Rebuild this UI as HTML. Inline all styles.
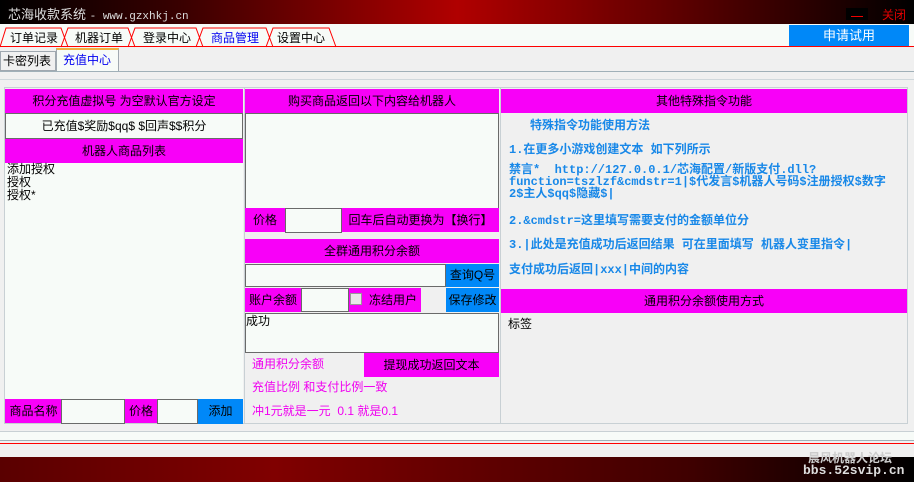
<!DOCTYPE html>
<html><head><meta charset="utf-8"><style>
*{margin:0;padding:0;box-sizing:border-box}
body{width:914px;height:482px;position:relative;overflow:hidden;background:#f0f0f0;font-family:"Liberation Sans","Noto Sans CJK SC",sans-serif;font-size:12px;color:#000}
.a{position:absolute;white-space:nowrap}
.m{position:absolute;background:#f800f8;text-align:center;line-height:24px;white-space:nowrap}
.b{position:absolute;background:#0088f8;text-align:center;white-space:nowrap}
.w{position:absolute;background:#f7fbf8;border:1px solid #6a6a6a}
.bl{color:#1888e8;font-weight:bold;font-size:12px;position:absolute;white-space:nowrap;font-family:"Liberation Mono","Noto Sans CJK SC",monospace}
.pk{color:#f000f0;position:absolute;white-space:nowrap}
</style></head><body>
<div class="a" style="left:0;top:0;width:914px;height:24px;background:linear-gradient(90deg,#000 0%,#3a0000 20%,#b00000 50%,#5a0000 75%,#000 100%)"></div>
<div class="a" style="left:8px;top:4px;color:#ddd;font-size:13px">芯海收款系统 <span style="font-family:'Liberation Mono';font-size:11px">- www.gzxhkj.cn</span></div>
<div class="a" style="left:846px;top:8px;width:22px;height:12px;background:#000"></div>
<div class="a" style="left:851px;top:16px;width:12px;height:1px;background:#e00"></div>
<div class="a" style="left:882px;top:6px;color:#e00000;font-size:12px">关闭</div>
<div class="a" style="left:0;top:24px;width:914px;height:23px;background:#f7fbf8;border-bottom:1px solid #f00"></div>
<svg class="a" style="left:0;top:24px" width="340" height="24"><g fill="none" stroke="#f00" stroke-width="1">
<path d="M0,23 L6,4 L61,4 L68,23"/><path d="M61,23 L68,4 L128,4 L135,23"/><path d="M128,23 L135,4 L196,4 L203,23"/><path d="M196,23 L203,4 L266,4 L273,23"/><path d="M266,23 L273,4 L329,4 L336,23"/></g></svg>
<div class="a" style="left:10px;top:29px">订单记录</div>
<div class="a" style="left:75px;top:29px">机器订单</div>
<div class="a" style="left:143px;top:29px">登录中心</div>
<div class="a" style="left:211px;top:29px;color:#0000f0">商品管理</div>
<div class="a" style="left:277px;top:29px">设置中心</div>
<div class="b" style="left:789px;top:25px;width:120px;height:21px;color:#fff;font-size:13px;line-height:21px">申请试用</div>
<div class="a" style="left:0;top:51px;width:56px;height:20px;border:1px solid #a0a8b0;background:#f0f0f0;padding-left:2px;line-height:18px">卡密列表</div>
<div class="a" style="left:56px;top:48px;width:63px;height:24px;border:1px solid #a0a8b0;border-top:2px solid #f0b040;border-bottom:none;background:#f7fbf8;color:#0000f0;padding-left:6px;line-height:21px">充值中心</div>
<div class="a" style="left:0;top:71px;width:914px;height:1px;background:#a0b0b8"></div>
<div class="a" style="left:0;top:79px;width:914px;height:1px;background:#d0d8dc"></div>
<div class="a" style="left:4px;top:87px;width:904px;height:337px;border:1px solid #c8d0d4"></div>
<!-- left -->
<div class="m" style="left:5px;top:89px;width:238px">积分充值虚拟号 为空默认官方设定</div>
<div class="w" style="left:5px;top:113px;width:238px;height:26px;text-align:center;line-height:24px">已充值$奖励$qq$ $回声$$积分</div>
<div class="m" style="left:5px;top:139px;width:238px">机器人商品列表</div>
<div class="a" style="left:5px;top:163px;width:238px;height:236px;background:#f7fbf8;line-height:13px;padding-left:2px">添加授权<br>授权<br>授权*</div>
<div class="m" style="left:5px;top:399px;width:57px">商品名称</div>
<div class="w" style="left:61px;top:399px;width:64px;height:25px"></div>
<div class="m" style="left:125px;top:399px;width:32px">价格</div>
<div class="w" style="left:157px;top:399px;width:41px;height:25px"></div>
<div class="b" style="left:198px;top:399px;width:45px;height:25px;line-height:24px">添加</div>
<div class="a" style="left:244px;top:88px;width:1px;height:336px;background:#c8d0d4"></div>
<!-- middle -->
<div class="m" style="left:245px;top:89px;width:254px">购买商品返回以下内容给机器人</div>
<div class="w" style="left:245px;top:113px;width:254px;height:96px"></div>
<div class="m" style="left:245px;top:208px;width:40px">价格</div>
<div class="w" style="left:285px;top:208px;width:57px;height:25px"></div>
<div class="m" style="left:342px;top:208px;width:157px">回车后自动更换为【换行】</div>
<div class="m" style="left:245px;top:239px;width:254px">全群通用积分余额</div>
<div class="w" style="left:245px;top:264px;width:201px;height:23px"></div>
<div class="b" style="left:446px;top:264px;width:53px;height:23px;line-height:22px">查询Q号</div>
<div class="m" style="left:245px;top:288px;width:56px;height:24px">账户余额</div>
<div class="w" style="left:301px;top:288px;width:48px;height:24px"></div>
<div class="m" style="left:349px;top:288px;width:72px;height:24px;text-align:right;padding-right:4px">冻结用户</div>
<div class="a" style="left:350px;top:293px;width:12px;height:12px;border:1px solid #999;background:#e8e8e8"></div>
<div class="b" style="left:446px;top:288px;width:53px;height:24px;line-height:24px">保存修改</div>
<div class="w" style="left:245px;top:313px;width:254px;height:40px;line-height:14px">成功</div>
<div class="pk" style="left:252px;top:355px">通用积分余额</div>
<div class="m" style="left:364px;top:353px;width:135px">提现成功返回文本</div>
<div class="pk" style="left:252px;top:378px">充值比例 和支付比例一致</div>
<div class="pk" style="left:252px;top:402px">冲1元就是一元 &nbsp;0.1 就是0.1</div>
<div class="a" style="left:500px;top:88px;width:1px;height:336px;background:#c8d0d4"></div>
<!-- right -->
<div class="m" style="left:501px;top:89px;width:406px">其他特殊指令功能</div>
<div class="bl" style="left:530px;top:116px">特殊指令功能使用方法</div>
<div class="bl" style="left:509px;top:140px">1.在更多小游戏创建文本 如下列所示</div>
<div class="bl" style="left:509px;top:164px;line-height:12px">禁言* &nbsp;http://127.0.0.1/芯海配置/新版支付.dll?<br>function=tszlzf&amp;cmdstr=1|$代发言$机器人号码$注册授权$数字<br>2$主人$qq$隐藏$|</div>
<div class="bl" style="left:509px;top:211px">2.&amp;cmdstr=这里填写需要支付的金额单位分</div>
<div class="bl" style="left:509px;top:235px">3.|此处是充值成功后返回结果 可在里面填写 机器人变里指令|</div>
<div class="bl" style="left:509px;top:260px">支付成功后返回|xxx|中间的内容</div>
<div class="m" style="left:501px;top:289px;width:406px">通用积分余额使用方式</div>
<div class="a" style="left:508px;top:315px">标签</div>
<!-- bottom -->
<div class="a" style="left:0;top:431px;width:914px;height:10px;background:#f7fbf8;border-top:1px solid #c8d0d4;border-bottom:1px solid #a0b0b8"></div>
<div class="a" style="left:0;top:443px;width:914px;height:1px;background:#f00"></div>
<div class="a" style="left:0;top:457px;width:914px;height:25px;background:linear-gradient(90deg,#5a0000 0%,#800000 30%,#400000 75%,#000 100%)"></div>
<div class="a" style="left:808px;top:449px;color:#ccc;font-weight:bold;font-size:12px">晨风机器人论坛</div>
<div class="a" style="left:803px;top:463px;color:#ddd;font-weight:bold;font-size:13px;font-family:'Liberation Mono',monospace">bbs.52svip.cn</div>
</body></html>
